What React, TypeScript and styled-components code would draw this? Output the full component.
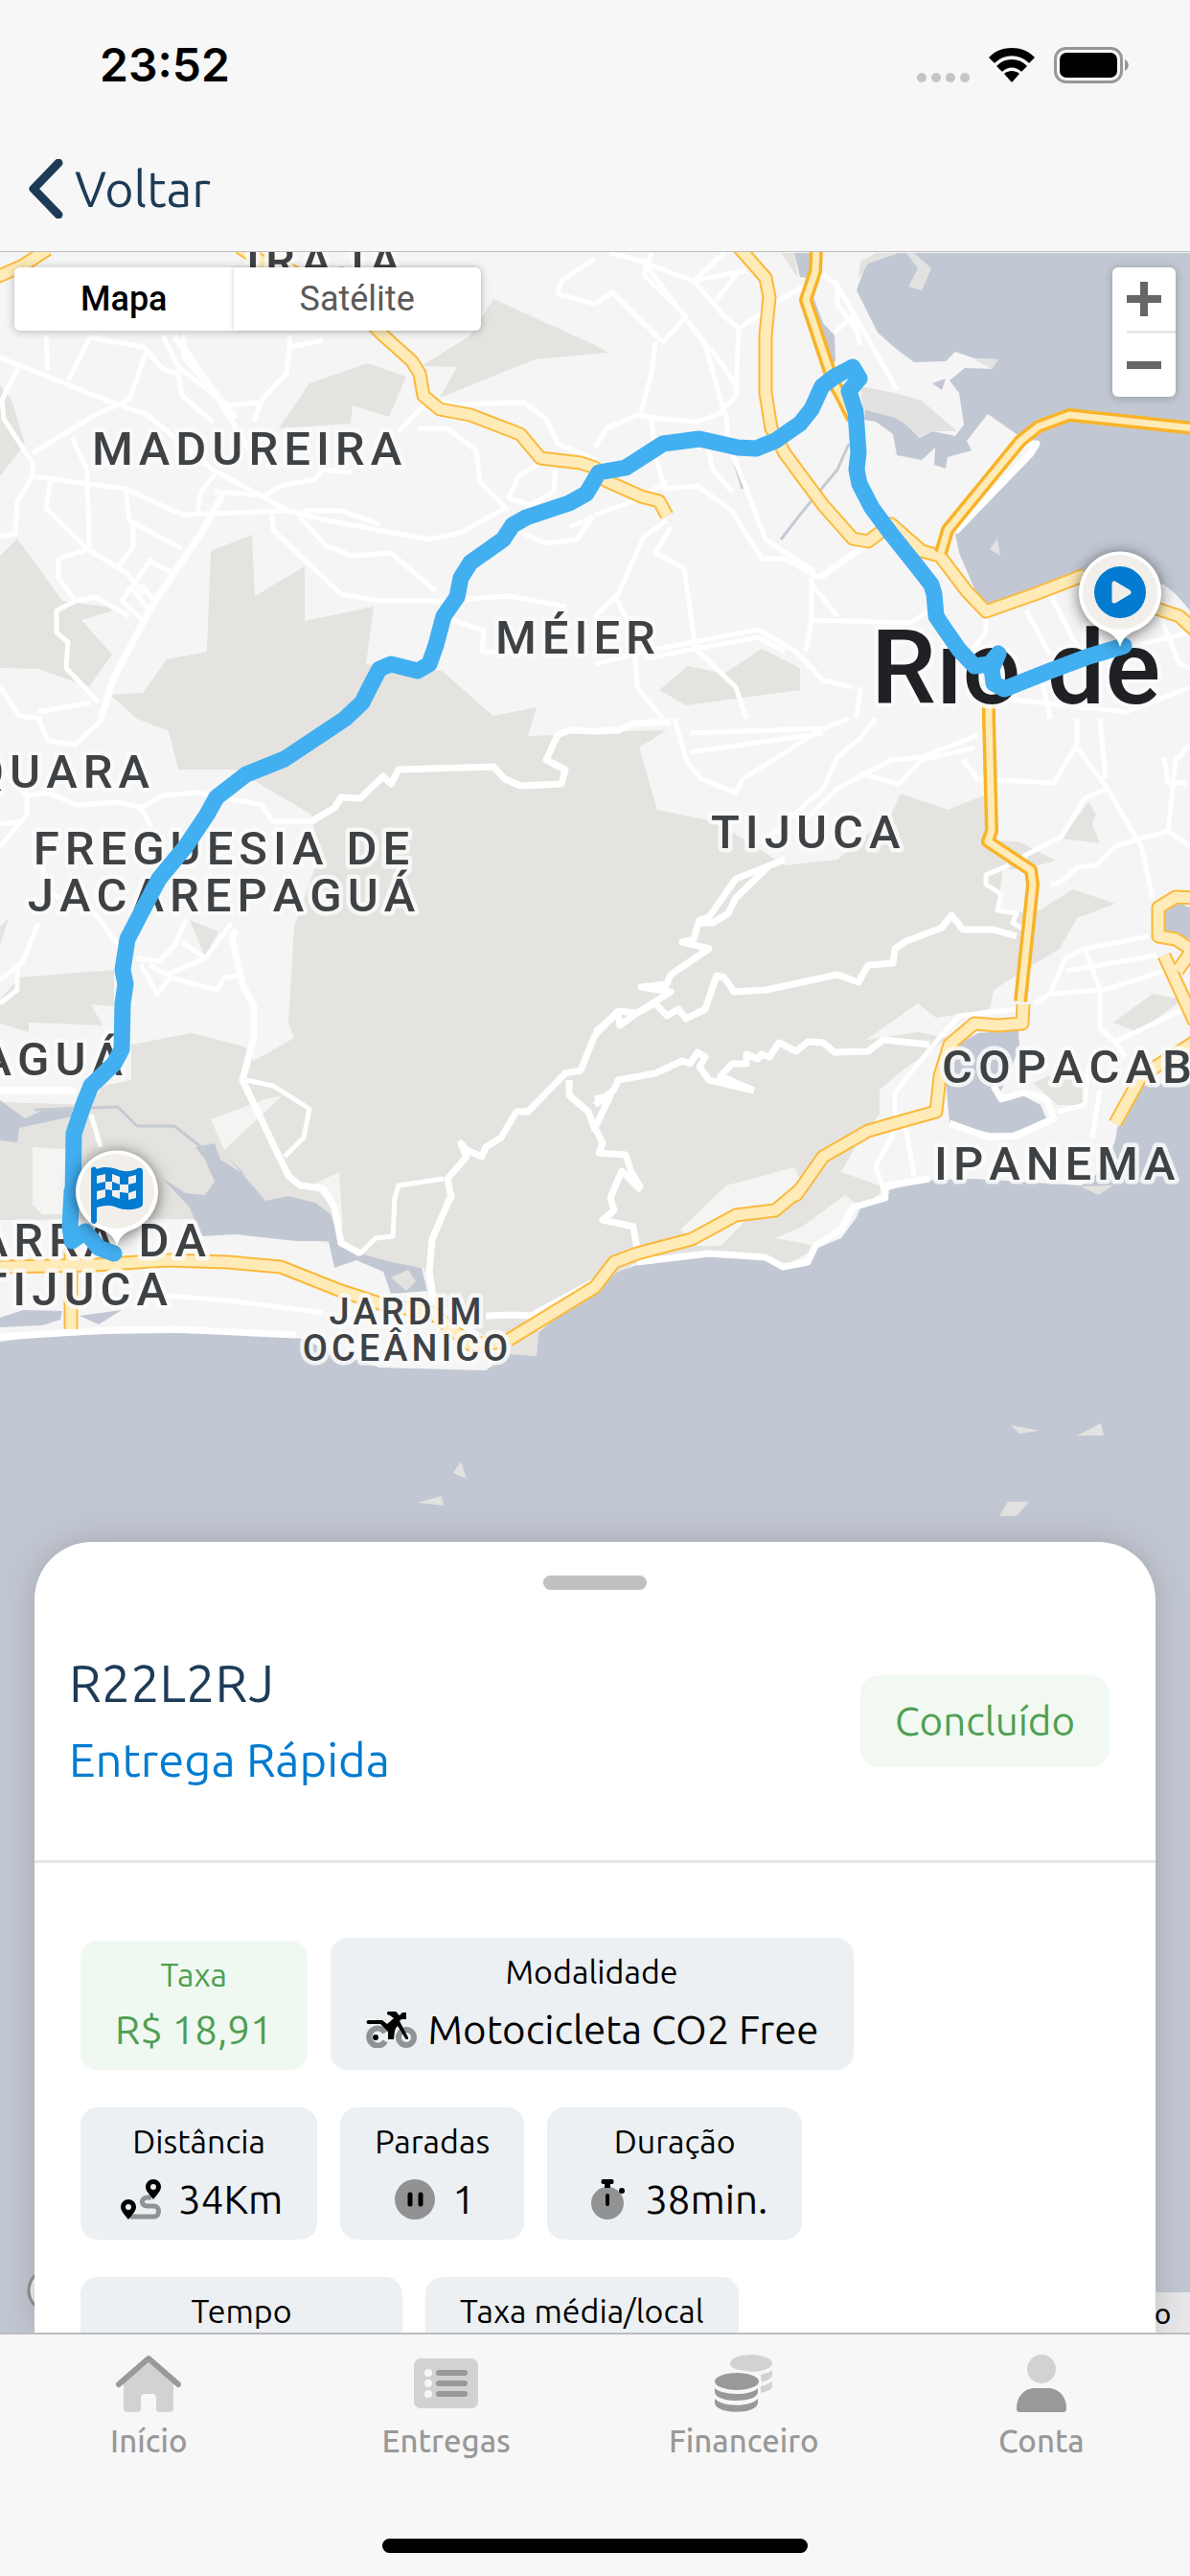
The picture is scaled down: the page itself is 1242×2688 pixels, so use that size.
import React, {useState} from 'react';
import styled, {createGlobalStyle, css} from "styled-components";

const INK = '#1d3b57';
const BLUE = '#027bd0';
const GREEN = '#4f9f52';

// ---------------------------------------------------------------- map data

// Every shape is a list of "x,y" points; a letter switches to the tile the following points belong to.
const TILES: Record<string, [number, number]> = {
    A: [0, -13],
    B: [621, -13],
    C: [0, 487],
    D: [621, 487],
    E: [0, 937],
    F: [621, 937],
};

const TILE_WIDTH = 621;
const UNITS_PER_TILE = 1568;

const project = (shape: string) => {
    let origin = TILES.A;
    const points: string[] = [];
    shape.split(' ').forEach(token => {
        if (TILES[token]) {
            origin = TILES[token];
            return;
        }
        const [x, y] = token.split(',').map(Number);
        points.push(`${Math.round(origin[0] + x * TILE_WIDTH / UNITS_PER_TILE)},${Math.round(origin[1] + y / 3)}`);
    });
    return points.join(' ');
};

const PARKS = [
    'A 1300,185 1568,330 B 35,355 A 1568,358 1410,375 1160,495 1205,400 1110,395 1240,300',
    'A 970,388 1070,430 1025,555 930,520 925,575 735,590 815,450',
    'A 0,455 30,500 65,640 0,740',
    'A 45,935 165,1130 315,1155 215,1190 295,1300 235,1400 100,1345 0,1340 0,990',
    'A 290,1425 375,1420 440,1315 545,1290 555,975 665,925 672,1115 803,1022 803,1195 985,1150 965,1330 1165,1350 1300,1490 1415,1465 C 1390,55 1465,50 1568,35 D 60,40 190,35 115,90 165,285 310,320 400,380 500,460 640,440 780,300 805,235 930,285 1025,240 1030,380 1115,385 1215,445 1130,470 1075,470 1060,600 1160,610 1260,535 1370,578 1270,625 1225,720 1155,770 1050,850 1040,910 900,935 850,890 715,1005 850,980 930,1000 800,1110 750,1160 750,1240 700,1310 650,1420 735,1455 770,1470 F 690,190 580,310 495,365 450,340 300,320 110,350 0,430 E 1420,560 1415,645 1340,640 1150,470 1115,370 1000,350 950,330 865,290 500,215 0,220 C 0,1200 240,1210 270,1150 345,1130 345,1020 505,985 645,1025 670,1070 775,1000 760,950 775,650 840,430 820,300 620,160 470,160 445,40 360,0',
    'C 50,810 300,785 300,900 240,895 270,960 75,950 75,980 0,955 0,880',
    'C 0,650 22,625 0,710',
    'C 500,630 575,665 540,745',
    'B 170,1410 245,1335 340,1360 440,1280 540,1340 540,1410 240,1458',
    'D 1300,260 1320,300 1310,330 1330,390 1230,375',
    'D 1365,950 1470,860 1550,880 1430,980',
    'D 1155,1140 1270,1080 1290,1210 1220,1210',
    'B 490,41 525,41 535,120',
];

const CLEARINGS = [
    'C 555,1255 700,1190 745,1180 590,1350',
    'F 225,250 345,110 525,55 540,90 470,175 370,190 395,225 330,300 270,300',
    'F 475,275 545,240 660,140 700,180 640,270 580,300',
    'E 820,110 895,68 905,250 880,180',
    'C 85,1340 200,1350 200,1500 E 165,200 110,200 85,170',
];

const WATERS = [
    'E 0,600 100,585 280,575 460,572 700,580 800,590 850,620 1000,680 1280,690 1340,640 1415,645 1420,570 1568,430 F 0,440 60,380 110,360 300,330 450,340 495,370 560,350 580,310 650,275 690,210 700,180 770,150 775,125 860,95 1000,90 1280,110 1340,60 D 1370,1320 1375,1280 1440,1150 1568,1130 F 1568,3800 E 0,3800',
    'B 740,41 715,75 690,160 745,290 790,340 840,385 925,380 950,350 1000,372 1062,375 1045,405 975,403 935,440 960,480 972,580 950,615 890,600 855,620 820,580 760,535 712,530 710,565 740,570 785,610 795,675 860,690 897,650 893,705 925,718 930,680 992,660 980,630 1035,545 1110,610 1165,635 950,920 960,980 1020,1150 1290,1040 1500,1080 1530,1110 1568,1160 1568,41',
    'B 890,450 925,435 915,472',
    'B 525,41 572,41 562,120 540,118',
    'B 575,180 600,260 630,300 635,380 615,400 570,220',
    'D 955,1020 1010,985 1115,975 1118,1030 1060,1190 1125,1180 1175,1210 1188,1250 1100,1295 1040,1295 935,1265 925,1130',
    'D 1495,590 1530,572 1568,590 1568,690 1530,675 1500,680',
    'C 515,1340 565,1330 580,1380 650,1430 E 590,10 700,160 760,145 830,165 870,200 900,290 950,325 1030,350 1110,370 1125,440 1030,450 1010,380 940,345 880,370 865,285 780,285 620,265 530,270 500,180 430,90 490,135 540,140 565,100 540,30',
    'C 0,1195 65,1250 120,1220 190,1225 190,1245 50,1280 45,1325 0,1320',
    'E 0,525 60,500 165,505 160,530 110,550 0,555',
    'E 210,520 320,500 260,545',
];

const ISLANDS = [
    'B 700,460 790,480 860,505 955,600 890,600 855,618 800,560 705,530',
    'B 800,41 720,75 695,120 700,70 740,41',
    'B 820,41 840,41 885,90 860,160 825,148 850,90',
    'B 1000,375 1062,375 1045,405',
    'B 1060,935 1040,970 1068,990',
    'F 1095,862 1172,878 1118,888',
    'F 1270,893 1332,855 1340,893',
    'F 1088,1102 1145,1102 1110,1147 1065,1145',
    'F 1280,115 1365,112 1325,140',
    'E 1215,975 1230,1030 1195,1010',
    'E 1100,1105 1165,1082 1170,1112',
    'E 1030,400 1075,375 1095,410 1070,440',
];

const CANALS = [
    'C 90,1225 310,1215 360,1275 460,1275 540,1350',
    'B 360,670 388,780',
    'B 670,640 640,720 540,860 490,940',
];

const STREETS = [
    'A 0,370 120,425 250,490 390,550 560,720 760,850 860,880 1130,940 1220,915 1330,840',
    'A 50,395 5,500 10,560 85,700 85,740 330,780 480,860 760,850',
    'A 240,300 180,440',
    'A 120,300 125,410',
    'A 235,305 380,335 430,405 470,420 480,490 560,570',
    'A 390,340 340,500 250,550 85,670',
    'A 430,300 470,400 600,520 680,510',
    'A 485,300 485,370 560,470 680,700',
    'A 765,300 755,420 690,500 670,570',
    'A 765,335 850,315',
    'A 190,620 230,720 235,970',
    'A 85,740 45,820 40,920 0,930',
    'A 135,750 120,840 230,970 330,1040 380,1110',
    'A 330,780 340,880 480,970',
    'A 350,890 350,960 310,1030',
    'A 230,970 155,1000 155,1060 200,1130 250,1120 340,1180',
    'A 200,1130 150,1160 150,1230 180,1260 175,1340 260,1450',
    'A 400,1000 320,1130 375,1190',
    'A 345,1090 395,1160',
    'A 370,1080 415,1140',
    'A 400,1010 460,1045',
    'A 570,730 530,790 520,850',
    'A 565,790 700,800 740,770 830,750 850,720 930,730',
    'A 715,850 720,910 900,1110 1000,1130 1150,1130 1340,1115 1490,1150',
    'A 790,870 860,960 930,990 1030,980 1150,1100',
    'A 1050,600 1130,500 1200,515 1380,510 1440,560 1470,640 1568,690',
    'A 1100,590 1180,590 1255,660 1265,760 1340,850',
    'A 1440,690 1365,740 1340,810 1400,830 1460,790 1465,720',
    'A 1380,920 1440,950 1520,940 1560,870 1500,900',
    'A 1190,1190 1275,1225 1270,1290 1390,1290',
    'A 1568,60 1480,130 1470,170 1568,200',
    'A 0,1400 50,1490 110,1500',
    'B 0,200 45,165 180,320 240,240 130,110 150,41',
    'B 100,60 260,130 400,95',
    'B 40,41 130,70 290,330 340,540 270,570 170,560 110,550 30,590 0,650',
    'B 260,130 340,240 380,280 370,490 330,540',
    'B 260,130 340,41',
    'B 160,320 150,420 120,540',
    'B 320,190 380,100',
    'B 380,280 490,190 600,110',
    'B 260,280 340,400 370,460',
    'B 600,110 640,140 640,200 700,300',
    'B 630,130 740,350 795,470',
    'B 630,290 680,240 700,330',
    'B 345,540 350,640 400,780 450,940 580,1040',
    'B 150,560 160,680 185,780 270,770 360,850 440,1000 500,1000 590,1060',
    'B 295,640 310,720 360,790',
    'B 0,860 100,820 190,760',
    'B 190,880 130,930 60,1110 0,1180',
    'B 200,900 160,980 235,1030 265,1280 370,1400 400,1500',
    'B 50,1110 100,1230 110,1400 180,1500',
    'B 0,1330 130,1290 430,1220 530,1290 600,1380 680,1400',
    'B 130,1310 430,1245 500,1290',
    'B 570,1060 570,1190 830,1200 880,1160',
    'B 570,1080 640,1180',
    'B 570,1190 555,1290',
    'B 1030,1180 1030,1230 990,1290',
    'B 1135,1160 1200,1300',
    'B 1200,1110 1260,1250 1300,1330',
    'B 1430,1270 1568,1230',
    'B 1480,1150 1540,1330 1568,1340',
    'B 700,1400 690,1500',
    'B 1180,1380 1200,1500',
    'B 1100,1440 1400,1480 1568,1400',
    'C 0,400 70,300 70,240 0,150',
    'C 100,0 125,70 200,80 270,0',
    'C 70,240 130,230 200,270 310,260 370,280 430,240 520,230 690,270 720,320 830,320',
    'C 370,280 400,340',
    'C 0,330 60,320',
    'C 100,640 60,760 0,820',
    'C 110,460 120,540 250,610 300,690 330,740',
    'C 45,780 45,850 0,890',
    'C 490,630 460,710 420,760 360,750',
    'C 480,700 540,750 610,640',
    'C 540,750 440,800 395,770',
    'C 370,770 415,860 450,810 570,850 590,810 640,805',
    'C 650,1130 720,1150 815,1220 800,1310 750,1370',
    'C 240,1240 265,1340',
    'C 1170,1440 1050,1460 1040,1500 E 1035,270 990,275 950,325 900,295',
    'D 210,0 240,130 280,190 370,230 390,190 600,30',
    'D 250,45 600,30 670,0',
    'D 250,105 600,45',
    'D 740,0 700,60 640,120 600,220 440,390',
    'D 1010,50 860,120 780,130 640,220 560,310',
    'D 1000,90 860,130 800,205 700,170',
    'D 970,130 1010,190 1210,200 1270,80 1270,0',
    'D 1270,90 1350,220 1440,400 1470,560',
    'D 1330,0 1345,190',
    'D 1350,220 1290,250 1230,370 1130,430 1130,460',
    'D 1200,520 1230,510 1270,465 1320,460 1370,400 1510,350 1568,400',
    'D 1510,350 1530,130 1568,80',
    'D 1500,120 1510,200 1560,200',
    'D 1160,890 1200,860 1240,750 1290,720 1460,680',
    'D 1200,860 1340,850 1500,790',
    'D 1240,790 1480,740',
    'D 1290,720 1330,850 1330,970 1370,1010 1400,1060',
    'D 1370,1010 1568,900',
    'D 1110,910 960,930 900,1010 790,1170 790,1230 820,1290 840,1430',
    'D 790,1290 740,1400 760,1470 F 770,140',
    'D 1330,1160 1310,1310',
    'D 1220,1230 1290,1210 1300,1090',
    'D 1090,460 1030,490 1030,520 1070,550 1060,600 1110,610 1100,640 1130,660',
    'E 440,455 600,470 850,510',
    'A 1000,890 900,850 800,850',
    'A 100,1480 240,1450',
];

const AVENUES = [
    'A 590,790 540,900 400,1150 300,1370 265,1500',
    'C 620,660 610,680 640,830 670,900 670,1000 640,1130 760,1430 790,1460 E 850,120 880,180 900,290 950,325',
    'C 820,320 880,280 900,245 950,250 1010,180 1030,205 1050,160 1300,150 1330,190 1370,210 1480,205 1490,160 1440,130 1470,50 1500,35 1568,40 D 60,35 100,15 200,10',
    'D 500,440 370,500 300,620 275,630 260,690 230,700 300,720 200,800 190,830 120,840 200,855 110,920 60,915 0,990',
    'D 460,460 370,560 350,610 310,640 280,640',
    'D 0,980 60,920 65,960 110,920 160,890 190,930 220,910 240,940 290,910 320,805 340,810 365,855 450,850 640,800 695,825 720,770 785,765 790,720 820,695 915,655 940,615 970,660 1050,660 1110,680',
    'D 0,1210 50,1160 60,1130 160,1110 230,1070 250,1080 270,1045 290,1060 275,1090 300,1130 420,1165',
    'D 420,1165 330,1120 360,1080 400,1080 400,1050 430,1065 440,1050 460,1060 485,1015 530,1040 560,1010 600,1015 630,1045 720,1040 760,1005 880,1020',
    'D 0,1190 40,1180 0,1280 20,1330 10,1360 80,1365 95,1420 120,1470',
    'C 1568,990 1530,1100 1490,1110 1390,1230 1360,1230 1320,1310 1280,1340 1270,1370 1230,1350 1215,1330 1230,1370 1180,1440 1190,1500 E 1190,140 1140,280 1130,380 1145,480',
    'C 1500,1130 1500,1180 1550,1230 1568,1290',
    'F 120,125 70,65 40,150 50,190 20,220 100,240 110,310',
    'F 110,350 300,325 450,335 495,365 560,350 580,300 650,250 680,180 765,150 760,115 880,90',
    'E 0,585 280,565 460,562 780,580',
    'E 1280,520 1350,515 1400,520 1568,410',
    'D 935,1265 1040,1310 1110,1305 1210,1250 1190,1190 1130,1170 1070,1190 1050,1150',
    'B 590,1060 700,970 720,955',
    'A 460,300 560,470 620,560',
    'C 0,1165 200,1165',
    'B 1130,640 1165,640 1150,670 950,915',
];

const HIGHWAYS = [
    'A -30,130 60,80 125,30',
    'A 630,25 690,70 750,85 960,240 1010,300 1085,380 1105,420 1115,490 1160,530 1240,550 1370,610 1425,685 1530,700 1568,715 B 20,750 120,805 170,820 190,865',
    'B 380,25 450,120 460,180 450,300 450,480 465,590 500,670 600,830 680,935 720,945 780,890 860,975 910,990 980,1100 1030,1165 1160,1110 1290,1050',
    'B 1480,1155 1540,1180 1580,1225',
    'E 0,365 250,360 440,345 600,350 740,365 900,440 1000,480 1140,510 1240,610 1340,600',
    'E 188,310 188,560',
    'D 1128,895 1125,955 1060,960 1000,955 935,1020 910,1120 900,1230 790,1265 720,1290 600,1370 530,1490 F 535,130 475,190 370,205 255,280 110,325 50,350 0,430 E 1340,595',
    'D 1580,560 1530,558 1485,590 1485,680 1530,690 1580,730',
    'D 1500,740 1580,950',
    'D 1575,720 1535,790',
    'D 1580,1010 1440,1120 1370,1265',
];

const TUNNELS = [
    'B 583,25 580,100 555,190 600,350 625,440 650,490 680,560',
    'B 1580,590 1250,550 1170,585 1120,630 930,910 912,980',
    'B 1038,1420 D 1038,0 1045,350 1035,385 1150,475 1155,520 1120,885',
];

const ROUTE = 'B 1395,1272 1300,1305 1200,1350 1078,1408 1050,1390 1045,1345 1062,1295 1040,1330 1000,1335 960,1285 920,1215 900,1180 895,1110 885,1080 840,1010 780,920 730,840 697,765 690,720 695,665 688,540 668,475 697,435 680,398 630,430 598,460 570,530 540,575 475,630 425,655 375,650 275,625 180,638 80,715 10,730 A 1545,795 1500,825 1385,870 1350,895 1325,940 1240,1010 1215,1060 1205,1120 1170,1180 1150,1270 1130,1330 1100,1350 1030,1330 1000,1345 975,1400 955,1450 910,1500 C 750,125 650,175 570,245 545,300 490,400 420,500 370,610 335,690 322,785 330,830 322,890 320,1035 300,1080 240,1150 220,1210 195,1300 193,1500 E 190,130 185,240 190,285 225,255 260,305 300,325';

type Place = {
    name: string;
    x: number;
    y: number;
    anchor?: 'start' | 'middle' | 'end';
    size?: 'city' | 'suburb';
}

const PLACES: Place[] = [
    {name: 'IRAJÁ', x: 257, y: 26},
    {name: 'MADUREIRA', x: 96, y: 222},
    {name: 'MÉIER', x: 517, y: 419},
    {name: 'TAQUARA', x: 162, y: 559, anchor: 'end'},
    {name: 'FREGUESIA DE', x: 234, y: 639, anchor: 'middle'},
    {name: 'JACAREPAGUÁ', x: 234, y: 688, anchor: 'middle'},
    {name: 'TIJUCA', x: 742, y: 622},
    {name: 'JACAREPAGUÁ', x: 134, y: 859, anchor: 'end'},
    {name: 'COPACABANA', x: 983, y: 867},
    {name: 'IPANEMA', x: 975, y: 968},
    {name: 'BARRA DA', x: 221, y: 1048, anchor: 'end'},
    {name: 'TIJUCA', x: 181, y: 1099, anchor: 'end'},
    {name: 'JARDIM', x: 425, y: 1119, anchor: 'middle', size: 'suburb'},
    {name: 'OCEÂNICO', x: 425, y: 1157, anchor: 'middle', size: 'suburb'},
    {name: 'Rio de', x: 909, y: 471, size: 'city'},
];

// ---------------------------------------------------------------- map

const Lines = ({shapes, width, color}: { shapes: string[], width: number, color: string }) => (
    <g fill="none" stroke={color} strokeWidth={width} strokeLinejoin="round">
        {shapes.map((shape, i) => <polyline key={i} points={project(shape)}/>)}
    </g>
);

const Areas = ({shapes, color}: { shapes: string[], color: string }) => (
    <g fill={color}>
        {shapes.map((shape, i) => <polygon key={i} points={project(shape)}/>)}
    </g>
);

const Pin = ({x, y, children}: { x: number, y: number, children: React.ReactNode }) => (
    <g transform={`translate(${x} ${y})`}>
        <PinBody d="M0 57C-4 44-12 42-21 38A43 43 0 1 1 21 38C12 42 4 44 0 57Z"/>
        <circle r="39" fill="#f2efeb"/>
        {children}
    </g>
);

const RouteMap = () => (
    <MapCanvas viewBox="0 0 1242 2172" preserveAspectRatio="xMidYMin slice" role="img" aria-label="Rota da entrega">
        <rect width="1242" height="2172" fill="#f5f5f5"/>
        <Areas shapes={PARKS} color="#e4e3df"/>
        <Areas shapes={CLEARINGS} color="#f4f4f3"/>
        <Areas shapes={WATERS} color="#c2c8d3"/>
        <Areas shapes={ISLANDS} color="#e2e3e0"/>
        <Lines shapes={CANALS} width={3} color="#c6cad3"/>
        <Lines shapes={STREETS} width={5} color="#fff"/>
        <Lines shapes={AVENUES} width={7} color="#fff"/>
        <Lines shapes={HIGHWAYS} width={15} color="#fbb93a"/>
        <Lines shapes={HIGHWAYS} width={11} color="#feebb8"/>
        <Lines shapes={TUNNELS} width={14} color="#f9b327"/>
        <Lines shapes={TUNNELS} width={7} color="#feebb8"/>
        {PLACES.map(({name, x, y, anchor, size}) => (
            <PlaceName key={name + y} x={x} y={y} textAnchor={anchor} $size={size}>{name}</PlaceName>
        ))}
        <polyline points={project(ROUTE)} fill="none" stroke="#42aff1" strokeWidth="17" strokeLinejoin="round" strokeLinecap="round"/>
        <Pin x={122} y={980}>
            <path fill={BLUE} d="M-27-22a3 3 0 0 1 6-1c7-3 14-2 21 0 7 3 15 3 22-1 3-1 5 0 5 3v34c0 2-1 3-3 4-8 3-16 3-24 0-7-3-14-2-21 0v14c0 4-6 4-6 0Z"/>
            <g fill="#f2efeb">
                <path d="M-12-18v8l-9 2v-8ZM3-15v8l-8-3v-8ZM20-17v8l-8 2v-8Z"/>
                <path d="M-5-10v9l-7-1v-8ZM12-7v9l-9-1v-8Z"/>
                <path d="M-12-2v8l-9 3V0ZM3-1v9l-8-3v-6ZM20-1v8l-8 2V2Z"/>
            </g>
        </Pin>
        <Pin x={1169} y={355}>
            <circle r="27" fill={BLUE}/>
            <path d="M-6-9v18L9 0Z" fill="#f2efeb" stroke="#f2efeb" strokeWidth="5" strokeLinejoin="round"/>
        </Pin>
        <circle cx="52" cy="2127" r="22" fill="#f2f2f2" stroke="#8b8d92" strokeWidth="3"/>
    </MapCanvas>
);

// ---------------------------------------------------------------- icons

const WifiIcon = () => (
    <svg width="48" height="36" viewBox="0 0 48 36">
        <path d="M24 0C33 0 41 3 47 9c1 1 1 1 0 2l-4 4c-1 1-1 1-2 0a25 25 0 0 0-34 0c-1 1-1 1-2 0L1 11c-1-1-1-1 0-2C7 3 15 0 24 0Z"/>
        <path d="M24 12c6 0 11 2 15 6 1 1 1 1 0 2l-4 4c-1 1-1 1-2 0a13 13 0 0 0-18 0c-1 1-1 1-2 0l-4-4c-1-1-1-1 0-2 4-4 9-6 15-6Z"/>
        <path d="M24 24c3 0 5 1 7 2 1 1 1 1 0 2l-6 7c-1 1-1 1-2 0l-6-7c-1-1-1-1 0-2 2-1 4-2 7-2Z"/>
    </svg>
);

const BatteryIcon = () => (
    <svg width="80" height="38" viewBox="0 0 80 38">
        <rect x="1.5" y="1.5" width="69" height="35" rx="11" fill="none" stroke="#979797" strokeWidth="3"/>
        <rect x="6" y="6" width="60" height="26" rx="7"/>
        <path d="M74 13c5 2 5 10 0 12Z" fill="#979797"/>
    </svg>
);

const BackIcon = () => (
    <svg width="36" height="62" viewBox="0 0 36 62">
        <path d="M31 4 5 31l26 27" fill="none" stroke={INK} strokeWidth="9" strokeLinecap="round" strokeLinejoin="round"/>
    </svg>
);

const MotorcycleIcon = () => (
    <svg width="54" height="38" viewBox="0 0 54 38">
        <g fill="none" stroke="#909294" strokeWidth="6">
            <path d="M21 22a9 9 0 1 0 0 9"/>
            <circle cx="43" cy="27" r="8"/>
        </g>
        <circle cx="11" cy="27" r="3"/>
        <path d="M4 9h14l5 4 7-6-4-3c-3 0-4-3-2-4h8c1 0 3 4 4 4l3-3h4v7h-5l-2 2 9 17c1 2-2 3-3 1l-8-13c-4 4-3 8-4 14h-6v-8l-8-8H3c-2-1-2-4 1-4Z"/>
    </svg>
);

const RouteIcon = () => (
    <svg width="42" height="42" viewBox="0 0 42 42">
        <path d="M10 39h25c6 0 6-11 0-11h-7c-8 0-7-9 0-9h4" fill="none" stroke="#909294" strokeWidth="5"/>
        <path fillRule="evenodd" d="M34 0a8 8 0 0 1 8 8c0 4-4 8-8 13-4-5-8-9-8-13a8 8 0 0 1 8-8Zm0 5a3 3 0 1 0 0 6 3 3 0 0 0 0-6ZM8 21a8 8 0 0 1 8 8c0 4-4 8-8 13-4-5-8-9-8-13a8 8 0 0 1 8-8Zm0 5a3 3 0 1 0 0 6 3 3 0 0 0 0-6Z"/>
    </svg>
);

const PauseIcon = () => (
    <svg width="42" height="42" viewBox="0 0 42 42">
        <circle cx="21" cy="21" r="21" fill="#909294"/>
        <path d="M16 16v10M27 16v10" stroke="#000" strokeWidth="5" strokeLinecap="round"/>
    </svg>
);

const StopwatchIcon = () => (
    <svg width="36" height="42" viewBox="0 0 36 42">
        <circle cx="18" cy="25" r="17" fill="#909294"/>
        <path d="M13 0h10c2 0 2 5 0 5h-2v4h-6V5h-2c-2 0-2-5 0-5Z"/>
        <path d="M18 17v9" stroke="#000" strokeWidth="4" strokeLinecap="round"/>
        <circle cx="33" cy="12" r="3"/>
    </svg>
);

const HomeIcon = () => (
    <svg width="68" height="60" viewBox="0 0 68 60">
        <path d="M8 30 34 8l26 22v26q0 4-4 4H46q-4 0-4-4V45q0-4-4-4h-8q-4 0-4 4v11q0 4-4 4H12q-4 0-4-4Z" fill="#d2d2d2"/>
        <path d="M3 31 34 4l31 27" fill="none" stroke="#999" strokeWidth="6" strokeLinecap="round" strokeLinejoin="round"/>
    </svg>
);

const ListIcon = () => (
    <svg width="68" height="60" viewBox="0 0 68 60">
        <rect y="4" width="67" height="52" rx="7" fill="#d2d2d2"/>
        <g fill="#f7f7f7">
            <circle cx="15" cy="19" r="4"/>
            <circle cx="15" cy="30" r="4"/>
            <circle cx="15" cy="41" r="4"/>
        </g>
        <path d="M26 19h27M26 30h27M26 41h27" stroke="#999" strokeWidth="6" strokeLinecap="round"/>
    </svg>
);

const CoinsIcon = () => (
    <svg width="60" height="60" viewBox="0 0 60 60">
        <g fill="#d2d2d2">
            <ellipse cx="38" cy="9" rx="22" ry="9"/>
            <path d="M48 21c5-1 9-3 12-5v5c0 4-5 6-12 8Z"/>
            <path d="M48 33c5-1 9-3 12-5v5c0 4-5 5-12 7Z"/>
        </g>
        <ellipse cx="23" cy="28" rx="26" ry="12" fill="#f7f7f7"/>
        <g fill="#999">
            <ellipse cx="23" cy="28" rx="23" ry="9"/>
            <path d="M0 35c9 8 37 8 45 0v4c0 12-45 12-45 0Z"/>
            <path d="M0 46c9 9 37 9 45 0v4c0 13-45 13-45 0Z"/>
        </g>
    </svg>
);

const UserIcon = () => (
    <svg width="54" height="60" viewBox="0 0 54 60">
        <circle cx="27" cy="15" r="15" fill="#d2d2d2"/>
        <path d="M1 56c0-12 8-21 19-21h14c11 0 19 9 19 21 0 3-1 4-4 4H5c-3 0-4-1-4-4Z" fill="#999"/>
    </svg>
);

// ---------------------------------------------------------------- screen

const MAP_TYPES = ['Mapa', 'Satélite'];

const TABS = [
    {label: 'Início', icon: <HomeIcon/>},
    {label: 'Entregas', icon: <ListIcon/>},
    {label: 'Financeiro', icon: <CoinsIcon/>},
    {label: 'Conta', icon: <UserIcon/>},
];

type ChipProps = {
    label: string;
    value?: string;
    icon?: React.ReactNode;
    highlighted?: boolean;
    wide?: boolean;
}

const Chip = ({label, value, icon, highlighted, wide}: ChipProps) => (
    <ChipBox $highlighted={highlighted} $wide={wide}>
        <ChipLabel>{label}</ChipLabel>
        {value && <ChipValue>{icon}{value}</ChipValue>}
    </ChipBox>
);

export default function App() {
    const [mapType, setMapType] = useState(MAP_TYPES[0]);

    return (
        <Screen>
            <GlobalStyle/>
            <Header>
                <StatusBar>
                    <Clock>23:52</Clock>
                    <StatusIcons>
                        <Signal><i/><i/><i/><i/></Signal>
                        <WifiIcon/>
                        <BatteryIcon/>
                    </StatusIcons>
                </StatusBar>
                <BackButton type="button"><BackIcon/>Voltar</BackButton>
            </Header>
            <MapStage>
                <RouteMap/>
                <MapControls>
                    <MapTypes>
                        {MAP_TYPES.map(type => (
                            <MapTypeButton key={type} type="button" $active={type === mapType} onClick={() => setMapType(type)}>
                                {type}
                            </MapTypeButton>
                        ))}
                    </MapTypes>
                    <ZoomControl>
                        <ZoomButton type="button" aria-label="Aumentar zoom">
                            <svg width="36" height="36"><path d="M14 0h8v14h14v8H22v14h-8V22H0v-8h14Z"/></svg>
                        </ZoomButton>
                        <ZoomDivider/>
                        <ZoomButton type="button" aria-label="Diminuir zoom">
                            <svg width="36" height="36"><path d="M0 14h36v8H0Z"/></svg>
                        </ZoomButton>
                    </ZoomControl>
                </MapControls>
                <Terms href="#termos">Termos de Uso</Terms>
                <Sheet>
                    <Handle/>
                    <SheetHeader>
                        <div>
                            <Code>R22L2RJ</Code>
                            <Service>Entrega Rápida</Service>
                        </div>
                        <Status>Concluído</Status>
                    </SheetHeader>
                    <Details>
                        <ChipRow>
                            <Chip label="Taxa" value="R$ 18,91" highlighted/>
                            <Chip label="Modalidade" value="Motocicleta CO2 Free" icon={<MotorcycleIcon/>}/>
                        </ChipRow>
                        <ChipRow>
                            <Chip label="Distância" value="34Km" icon={<RouteIcon/>}/>
                            <Chip label="Paradas" value="1" icon={<PauseIcon/>}/>
                            <Chip label="Duração" value="38min." icon={<StopwatchIcon/>}/>
                        </ChipRow>
                        <ChipRow>
                            <Chip label="Tempo" wide/>
                            <Chip label="Taxa média/local"/>
                        </ChipRow>
                    </Details>
                </Sheet>
            </MapStage>
            <TabBar>
                <Tabs>
                    {TABS.map(({label, icon}) => (
                        <Tab key={label} href={`#${label.toLowerCase()}`}>{icon}{label}</Tab>
                    ))}
                </Tabs>
                <HomeIndicator/>
            </TabBar>
        </Screen>
    );
}

const GlobalStyle = createGlobalStyle`
* {
    box-sizing: border-box;
}
body {
    margin: 0;
    font-family: Ubuntu, "Noto Sans", sans-serif;
}
button {
    border: 0;
    padding: 0;
    background: none;
    font: inherit;
}
svg {
    display: block;
    flex: none;
}
`;

const Screen = styled.div`
display: flex;
flex-direction: column;
height: 100vh;
background: #f7f7f7;
`;

const Header = styled.header`
border-bottom: 1px solid #bcbcbe;
`;

const StatusBar = styled.div`
display: flex;
justify-content: space-between;
align-items: center;
height: 132px;
padding: 4px 62px 0 104px;
`;

const Clock = styled.time`
font: 600 48px/60px Inter, sans-serif;
`;

const StatusIcons = styled.div`
display: flex;
align-items: center;
gap: 20px;
`;

const Signal = styled.div`
display: flex;
gap: 5px;
padding-top: 26px;

i {
    width: 10px;
    height: 10px;
    border-radius: 50%;
    background: #c5c5c5;
}
`;

const BackButton = styled.button`
display: flex;
align-items: center;
gap: 12px;
height: 130px;
padding-left: 30px;
font-size: 52px;
color: ${INK};
`;

const MapStage = styled.main`
position: relative;
flex: 1;
min-height: 0;
display: flex;
flex-direction: column;
justify-content: space-between;
overflow: hidden;
`;

const MapCanvas = styled.svg`
position: absolute;
inset: 0;
width: 100%;
height: 100%;
`;

const PinBody = styled.path`
fill: #fff;
filter: drop-shadow(0 2px 8px rgba(0, 0, 0, 0.55));
`;

type PlaceNameProps = {
    $size?: 'city' | 'suburb',
}

const PlaceName = styled.text<PlaceNameProps>`
font: 500 49px Roboto, sans-serif;
font-kerning: none;
letter-spacing: 6px;
fill: #3f4245;
stroke: rgba(250, 250, 250, 0.85);
stroke-width: 9px;
stroke-linejoin: round;
paint-order: stroke;

${props => props.$size === 'suburb' && css`
    font-size: 38px;
    letter-spacing: 4px;
`}

${props => props.$size === 'city' && css`
    font-size: 108px;
    letter-spacing: normal;
    fill: #202124;
`}
`;

const MapControls = styled.div`
position: relative;
display: flex;
justify-content: space-between;
align-items: flex-start;
padding: 16px 15px;
`;

const MapTypes = styled.div`
display: flex;
border-radius: 6px;
box-shadow: 0 1px 10px rgba(0, 0, 0, 0.25);
`;

type MapTypeButtonProps = {
    $active: boolean,
}

const MapTypeButton = styled.button<MapTypeButtonProps>`
height: 66px;
padding: 0 69px;
background: #fff;
font: ${props => props.$active ? 500 : 400} 36px Roboto, sans-serif;
color: ${props => props.$active ? '#000' : '#5a5a5a'};

&:first-child {
    border-radius: 6px 0 0 6px;
}
&:last-child {
    border-radius: 0 6px 6px 0;
    box-shadow: -1px 0 4px rgba(0, 0, 0, 0.15);
}
`;

const ZoomControl = styled.div`
width: 66px;
border-radius: 6px;
background: #fff;
box-shadow: 0 1px 10px rgba(0, 0, 0, 0.25);
`;

const ZoomButton = styled.button`
display: grid;
place-items: center;
width: 66px;
height: 66px;
fill: #666;
`;

const ZoomDivider = styled.div`
height: 3px;
margin-left: 15px;
background: #e8e8e8;
`;

const Terms = styled.a`
position: absolute;
right: 0;
bottom: 0;
height: 42px;
padding: 0 20px;
background: #e8e8ea;
font: 30px/46px Roboto, sans-serif;
color: #000;
text-decoration: none;
`;

const Sheet = styled.section`
position: relative;
flex: 0 0 38%;
margin: 0 36px;
border-radius: 60px 60px 0 0;
background: #fff;
box-shadow: 0 0 36px rgba(110, 100, 100, 0.35);
overflow: hidden;
`;

const Handle = styled.div`
width: 108px;
height: 15px;
margin: 35px auto 0;
border-radius: 8px;
background: #c0c0bf;
`;

const SheetHeader = styled.div`
display: flex;
justify-content: space-between;
align-items: center;
height: 285px;
padding: 0 48px 8px 36px;
border-bottom: 3px solid #e6e6e6;
`;

const Code = styled.h1`
margin: 0;
font-size: 54px;
line-height: 80px;
font-weight: 400;
color: ${INK};
`;

const Service = styled.p`
margin: 0;
font-size: 49px;
line-height: 80px;
color: ${BLUE};
`;

const Status = styled.span`
padding: 0 36px;
border-radius: 20px;
background: #f1f9f2;
font-size: 42px;
line-height: 96px;
color: ${GREEN};
`;

const Details = styled.div`
display: flex;
flex-direction: column;
gap: 39px;
padding: 78px 48px 0;
`;

const ChipRow = styled.div`
display: flex;
align-items: flex-end;
gap: 24px;
`;

type ChipBoxProps = {
    $highlighted?: boolean,
    $wide?: boolean,
}

const ChipBox = styled.dl<ChipBoxProps>`
display: flex;
flex-direction: column;
justify-content: space-between;
align-items: center;
min-width: ${props => props.$wide ? 336 : 0}px;
height: ${props => props.$highlighted ? 135 : 138}px;
margin: 0;
padding: 10px 36px 12px;
border-radius: 18px;
background: ${props => props.$highlighted ? '#f0f9f1' : '#ecf0f3'};
color: ${props => props.$highlighted ? GREEN : '#000'};
`;

const ChipLabel = styled.dt`
font-size: 34px;
line-height: 50px;
`;

const ChipValue = styled.dd`
display: flex;
align-items: center;
gap: 12px;
margin: 0;
font-size: 42px;
line-height: 60px;
white-space: nowrap;

svg {
    width: 54px;
}
`;

const TabBar = styled.footer`
display: flex;
flex-direction: column;
justify-content: space-between;
align-items: center;
height: 254px;
padding: 21px 0 24px;
border-top: 2px solid #bcbcbe;
`;

const Tabs = styled.nav`
display: flex;
align-self: stretch;
`;

const Tab = styled.a`
flex: 1;
display: flex;
flex-direction: column;
align-items: center;
gap: 6px;
font-size: 33px;
line-height: 48px;
font-weight: 500;
color: #999;
text-decoration: none;
`;

const HomeIndicator = styled.div`
width: 444px;
height: 15px;
border-radius: 8px;
background: #000;
`;
